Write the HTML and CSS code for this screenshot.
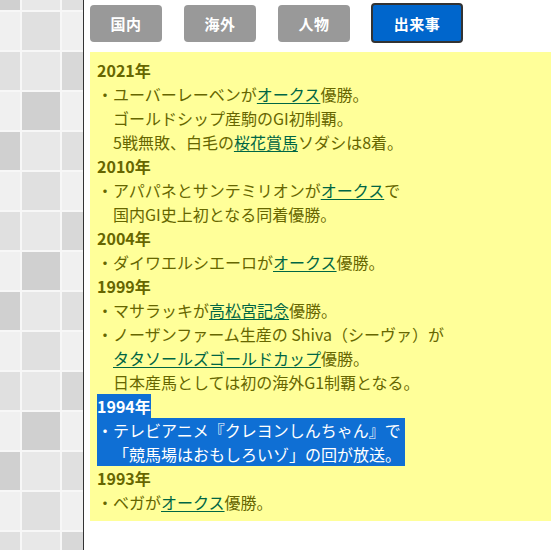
FILE: index.html
```html
<!DOCTYPE html>
<html lang="ja">
<head>
<meta charset="utf-8">
<title>出来事</title>
<link rel="stylesheet" href="styles.css">
</head>
<body>
<aside class="side">
  <svg class="tiles" width="83" height="550" viewBox="0 0 83 550" aria-hidden="true">
    <defs>
      <pattern id="tp" x="-20" y="-30" width="120" height="160" patternUnits="userSpaceOnUse">
        <rect x="0" y="0" width="120" height="160" fill="#f7f7f7"/>
        <rect x="2" y="2" width="38" height="38" fill="#d0d0d0"/>
        <rect x="42" y="2" width="38" height="38" fill="#e8e8e8"/>
        <rect x="82" y="2" width="38" height="38" fill="#e0e0e0"/>
        <rect x="2" y="42" width="38" height="38" fill="#f0f0f0"/>
        <rect x="42" y="42" width="38" height="38" fill="#e0e0e0"/>
        <rect x="82" y="42" width="38" height="38" fill="#f0f0f0"/>
        <rect x="2" y="82" width="38" height="38" fill="#e0e0e0"/>
        <rect x="42" y="82" width="38" height="38" fill="#e8e8e8"/>
        <rect x="82" y="82" width="38" height="38" fill="#d8d8d8"/>
        <rect x="2" y="122" width="38" height="38" fill="#f0f0f0"/>
        <rect x="42" y="122" width="38" height="38" fill="#d0d0d0"/>
        <rect x="82" y="122" width="38" height="38" fill="#f0f0f0"/>
      </pattern>
    </defs>
    <rect x="0" y="0" width="83" height="550" fill="url(#tp)"/>
  </svg>
</aside>
<main class="main">
  <nav class="tabs">
    <span class="tab">国内</span>
    <span class="tab">海外</span>
    <span class="tab">人物</span>
    <span class="tab active">出来事</span>
  </nav>
  <section class="panel">
    <h3 class="year">2021年</h3>
    <p class="item">・ユーバーレーベンが<a href="#">オークス</a>優勝。<br>ゴールドシップ産駒のGI初制覇。<br>5戦無敗、白毛の<a href="#">桜花賞馬</a>ソダシは8着。</p>
    <h3 class="year">2010年</h3>
    <p class="item">・アパパネとサンテミリオンが<a href="#">オークス</a>で<br>国内GI史上初となる同着優勝。</p>
    <h3 class="year">2004年</h3>
    <p class="item">・ダイワエルシエーロが<a href="#">オークス</a>優勝。</p>
    <h3 class="year">1999年</h3>
    <p class="item">・マサラッキが<a href="#">高松宮記念</a>優勝。</p>
    <p class="item">・ノーザンファーム生産の Shiva（シーヴァ）が<br><a href="#">タタソールズゴールドカップ</a>優勝。<br>日本産馬としては初の海外G1制覇となる。</p>
    <h3 class="year"><span class="sel">1994年</span></h3>
    <p class="item sel-block">・テレビアニメ『クレヨンしんちゃん』で<br>「競馬場はおもしろいゾ」の回が放送。</p>
    <h3 class="year">1993年</h3>
    <p class="item">・ベガが<a href="#">オークス</a>優勝。</p>
  </section>
</main>
</body>
</html>
```

FILE: styles.css
```css
html, body {
  margin: 0;
  padding: 0;
  background: #ffffff;
  overflow: hidden;
}

body {
  display: flex;
  height: 550px;
  font-family: "Noto Sans CJK JP", "Noto Sans", sans-serif;
}

.side {
  width: 83px;
  flex: 0 0 83px;
  height: 550px;
  border-right: 1px solid #333333;
}

.tiles {
  display: block;
}

.main {
  flex: 1;
  padding: 3px 0 0 6px;
  min-width: 0;
}

.tabs {
  display: flex;
  align-items: center;
  gap: 22px;
  height: 40px;
}

.tab {
  display: flex;
  align-items: center;
  justify-content: center;
  width: 72px;
  height: 37px;
  border-radius: 4px;
  background: #999999;
  color: #ffffff;
  font-size: 15px;
  font-weight: bold;
  letter-spacing: 0.5px;
}

.tab.active {
  width: 88px;
  height: 36px;
  background: #0066cc;
  border: 2px solid #333333;
  margin-left: -1px;
}

.panel {
  margin-top: 9px;
  background: #ffff99;
  padding: 6px 0 7px 7px;
  color: #666600;
  font-size: 16px;
  line-height: 24px;
}

.year {
  margin: 0;
  font-size: 16px;
  font-weight: bold;
  line-height: 24px;
  color: #666600;
}

.item {
  margin: 0;
  padding-left: 1em;
  text-indent: -1em;
}

.item a {
  color: #006644;
  text-decoration: underline;
  text-decoration-thickness: 1px;
  text-underline-offset: 2px;
}

.sel {
  background: #0f6fd4;
  color: #ffffff;
}

.sel-block {
  display: table;
  background: #0f6fd4;
  color: #ffffff;
  padding-right: 4px;
}
```
